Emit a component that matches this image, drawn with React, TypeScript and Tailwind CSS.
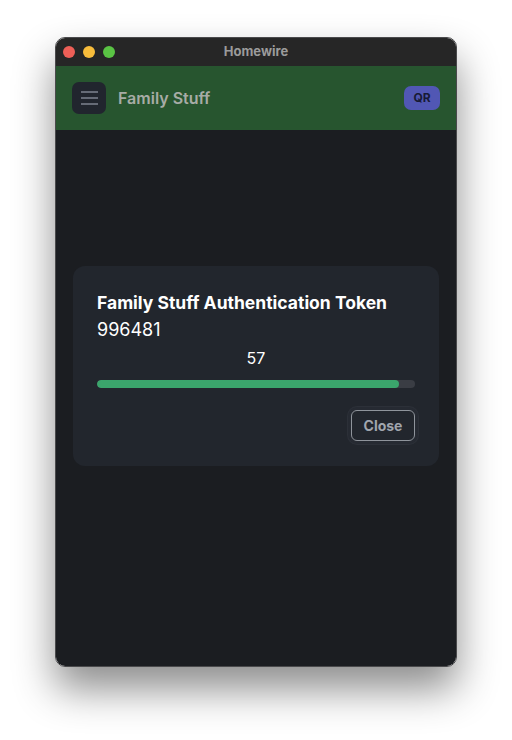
import React from "react";

export default function App() {
  const pct = (57 / 60) * 100;
  return (
    <div
      className="w-[512px] h-[740px] bg-white flex justify-center pt-[37px]"
      style={{ fontFamily: "Inter, 'Noto Sans', sans-serif" }}
    >
      <div className="w-[402px] h-[630px] rounded-[10px] overflow-hidden flex flex-col border border-[#4a4a4c] shadow-[0_22px_40px_rgba(0,0,0,0.45)]">
        <div className="h-[28px] bg-[#262626] relative flex items-center justify-center shrink-0">
          <div className="absolute left-[7px] top-[8px] flex gap-[8px]">
            <div className="w-[12px] h-[12px] rounded-full bg-[#ee5f57]" />
            <div className="w-[12px] h-[12px] rounded-full bg-[#f8bd3b]" />
            <div className="w-[12px] h-[12px] rounded-full bg-[#5ac444]" />
          </div>
          <span className="text-[13px] font-bold text-[#9b9b9b]">Homewire</span>
        </div>
        <div className="h-[64px] bg-[#27552f] flex items-center pl-[16px] pr-[16px] shrink-0">
          <div className="w-[34px] h-[32px] rounded-[7px] bg-[#21252e] flex flex-col items-center justify-center gap-[4px]">
            <div className="w-[17px] h-[2px] bg-[#666b77]" />
            <div className="w-[17px] h-[2px] bg-[#666b77]" />
            <div className="w-[17px] h-[2px] bg-[#666b77]" />
          </div>
          <span className="ml-[12px] text-[16px] font-semibold text-[#a7aca6]">Family Stuff</span>
          <div className="ml-auto w-[36px] h-[24px] rounded-[7px] bg-[#5157b4] flex items-center justify-center text-[12px] font-bold text-[#171a36]">
            QR
          </div>
        </div>
        <div className="flex-1 bg-[#1b1d21] pt-[136px] px-[17px]">
          <div className="bg-[#22262d] rounded-[12px] px-[24px] pt-[25px] pb-[25px] text-white">
            <div className="text-[17.5px] font-bold leading-[24px]">Family Stuff Authentication Token</div>
            <div className="text-[18px] leading-[26px] mt-[2px]">996481</div>
            <div className="text-[16px] leading-[20px] text-center mt-[5px]">57</div>
            <div className="mt-[12px] h-[8px] rounded-full bg-[#3a3d44] overflow-hidden">
              <div className="h-full rounded-full bg-[#3ba56c]" style={{ width: `${pct}%` }} />
            </div>
            <div className="flex justify-end mt-[22px]">
              <button className="h-[31px] w-[64px] rounded-[6px] border border-[#8f949b] text-[14px] font-bold text-[#a0a5ad] shadow-[0_0_0_3px_#262a32,0_0_0_4px_#2c3038]">
                Close
              </button>
            </div>
          </div>
        </div>
      </div>
    </div>
  );
}
